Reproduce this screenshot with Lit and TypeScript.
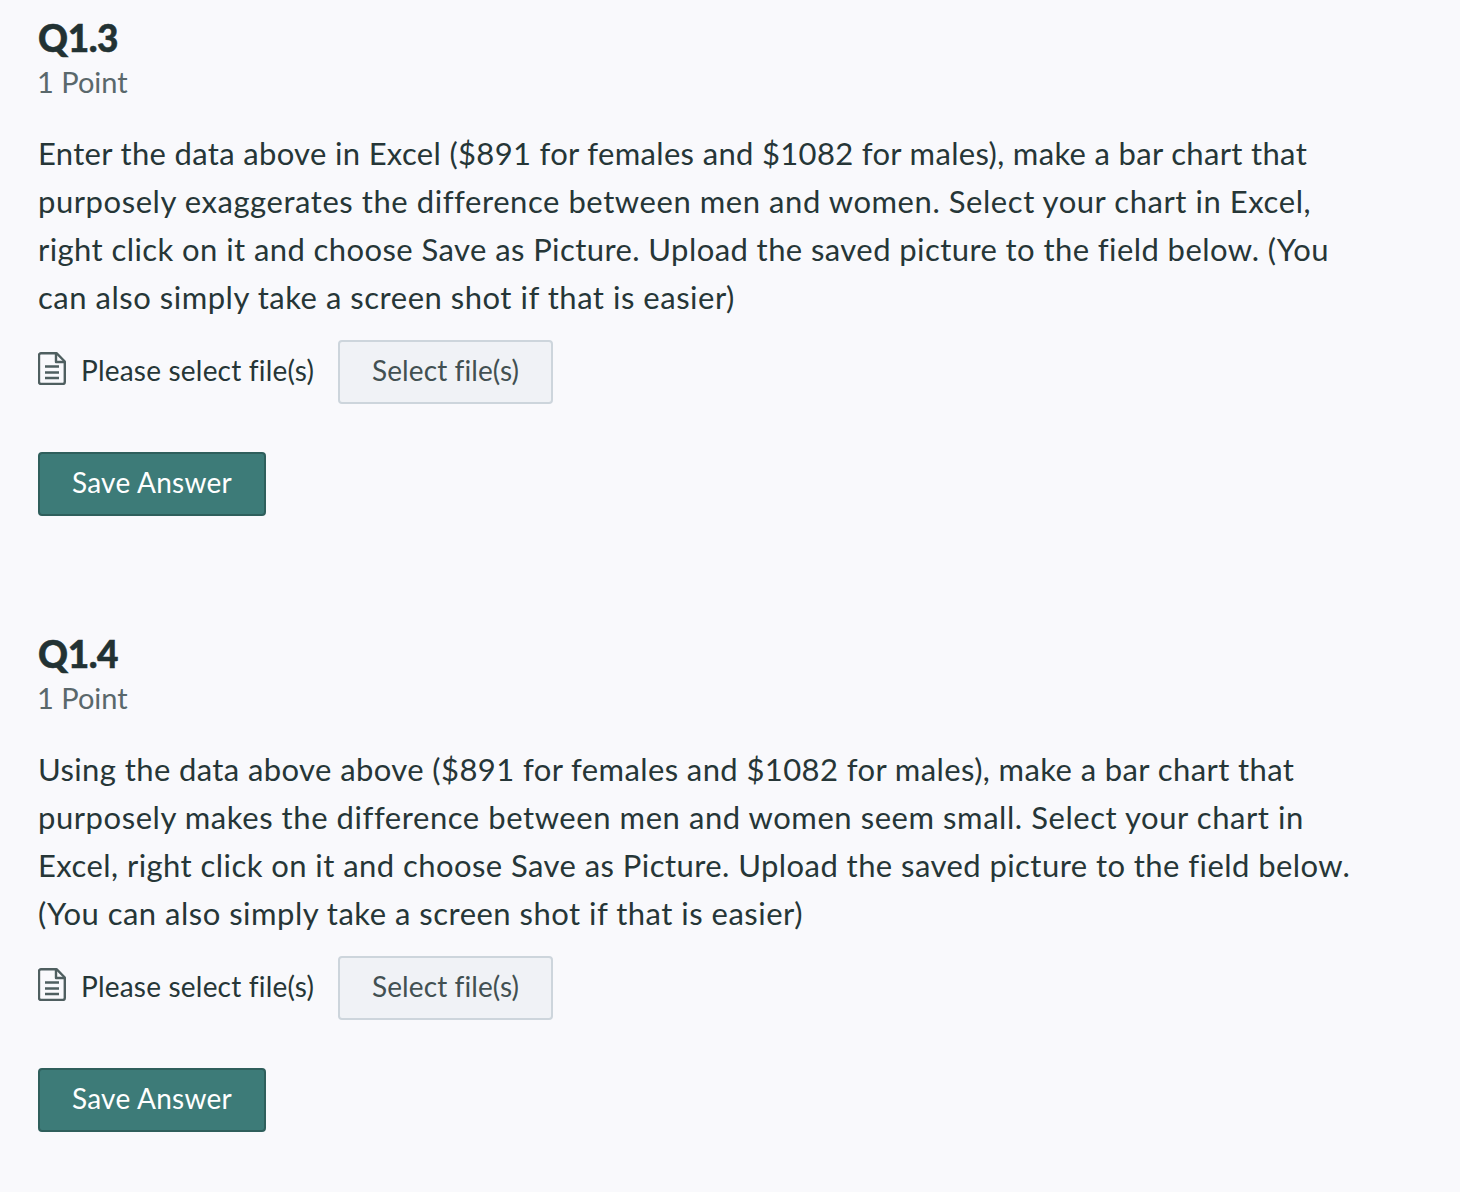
import { LitElement, html, css } from "lit";
import { customElement } from "lit/decorators.js";

const QS = [
  { id: "Q1.3", lines: [
    { t: "Enter the data above in Excel ($891 for females and $1082 for males), make a bar chart that", ls: 0.33 },
    { t: "purposely exaggerates the difference between men and women. Select your chart in Excel,", ls: 0.56 },
    { t: "right click on it and choose Save as Picture. Upload the saved picture to the field below. (You", ls: 0.42 },
    { t: "can also simply take a screen shot if that is easier)", ls: 0.52 },
  ] },
  { id: "Q1.4", lines: [
    { t: "Using the data above above ($891 for females and $1082 for males), make a bar chart that", ls: 0.4 },
    { t: "purposely makes the difference between men and women seem small. Select your chart in", ls: 0.56 },
    { t: "Excel, right click on it and choose Save as Picture. Upload the saved picture to the field below.", ls: 0.44 },
    { t: "(You can also simply take a screen shot if that is easier)", ls: 0.49 },
  ] },
];

@customElement("app-root")
export class AppRoot extends LitElement {
  static styles = css`
    :host { display: block; height: 1192px; background: #f9f9fc; overflow: hidden; font-family: "Lato", "Open Sans", sans-serif; color: #263637; font-variant-ligatures: none; }
    .wrap { padding: 14px 38px 0; display: flex; flex-direction: column; gap: 114px; }
    .title { margin: 0; font-size: 37px; line-height: 48px; font-weight: 900; color: #223233; letter-spacing: -0.4px; -webkit-text-stroke: 0.5px #223233; }
    .pts { font-size: 29px; line-height: 40px; color: #5a686b; height: 36px; margin-left: -1px; }
    .body { margin-top: 31px; font-size: 31px; line-height: 48px; white-space: nowrap; }
    .file { display: flex; align-items: center; margin-top: 19px; height: 64px; font-size: 28px; letter-spacing: 0.2px; }
    .label { margin-bottom: 5px; }
    .icon { width: 28px; height: 33px; margin: 0 15px 7px 0; flex: none; }
    .sel { margin-left: 24px; width: 215px; height: 64px; box-sizing: border-box; padding-bottom: 5px; border: 2px solid #cdd5dc; background: #f0f2f6; border-radius: 4px; display: flex; align-items: center; justify-content: center; color: #425052; letter-spacing: 0.1px; }
    .save { margin-top: 48px; width: 228px; height: 64px; box-sizing: border-box; padding-bottom: 5px; background: #3d7b78; border: 2px solid #2f5f5c; border-radius: 4px; color: #fff; font-size: 28px; letter-spacing: 0.27px; display: flex; align-items: center; justify-content: center; }
  `;
  render() {
    return html`<div class="wrap">${QS.map(q => html`<section>
      <div class="title">${q.id}</div>
      <div class="pts">1 Point</div>
      <div class="body">${q.lines.map(l => html`<div style="letter-spacing:${l.ls}px">${l.t}</div>`)}</div>
      <div class="file">
        <svg class="icon" viewBox="0 0 28 33" fill="none" stroke="#4f5f60" stroke-width="2.4" stroke-linejoin="round"><path d="M3 1.200h15.500L26.800 9.500V30a2 2 0 0 1-2 2H3a2 2 0 0 1-2-2V3.200a2 2 0 0 1 2-2z"/><path d="M18 1.500V10h8.500"/><path d="M7 14.500h14M7 20.500h14M7 26h14"/></svg>
        <span class="label">Please select file(s)</span>
        <div class="sel">Select file(s)</div>
      </div>
      <div class="save">Save Answer</div>
    </section>`)}</div>`;
  }
}
